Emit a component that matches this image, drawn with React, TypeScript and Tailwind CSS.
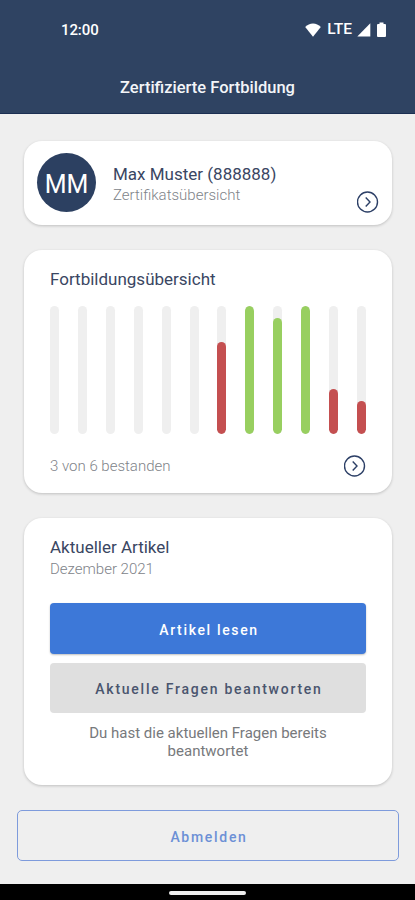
import type { ReactNode } from 'react';

interface Bar {
  height: number;
  passed: boolean;
}

const BAR_MAX = 128;

// Fortbildungen der letzten 12 Monate, null = nicht teilgenommen
const BARS: (Bar | null)[] = [
  null,
  null,
  null,
  null,
  null,
  null,
  { height: 92, passed: false },
  { height: 128, passed: true },
  { height: 116, passed: true },
  { height: 128, passed: true },
  { height: 45, passed: false },
  { height: 33, passed: false },
];

function StatusBar() {
  return (
    <div className="flex h-[60px] items-center justify-between pr-[28px] pl-[61px] text-white">
      <span className="text-[15px] font-medium tracking-[-0.1px]">12:00</span>
      <div className="flex items-center">
        <svg width="16" height="14" viewBox="0 0 16 14" fill="currentColor">
          <path d="M8 13.800 0.200 4C2.400 1.700 5 0.400 8 0.400s5.600 1.300 7.800 3.600z" />
        </svg>
        <span className="ml-[6px] text-[15.500px] font-medium">LTE</span>
        <svg
          className="ml-[5px]"
          width="14"
          height="14"
          viewBox="0 0 14 14"
          fill="currentColor"
        >
          <path d="M13.300 0.300v13.200H0.300z" />
        </svg>
        <svg
          className="ml-[5px]"
          width="11"
          height="16"
          viewBox="0 0 11 16"
          fill="currentColor"
        >
          <path d="M3.500 0.500h4V2H9a1 1 0 0 1 1 1v11a1 1 0 0 1-1 1H2a1 1 0 0 1-1-1V3a1 1 0 0 1 1-1h1.500z" />
        </svg>
      </div>
    </div>
  );
}

function Card({
  className,
  children,
}: {
  className: string;
  children: ReactNode;
}) {
  return (
    <section
      className={`rounded-[18px] bg-white shadow-[0_1px_3px_rgba(0,0,0,0.2)] ${className}`}
    >
      {children}
    </section>
  );
}

function ChevronCircle() {
  return (
    <svg
      className="shrink-0"
      width="22"
      height="22"
      viewBox="0 0 22 22"
      fill="none"
      stroke="#2c3f66"
      strokeWidth="1.400"
    >
      <circle cx="10.500" cy="11" r="10" />
      <path d="m8.700 6.500 4.300 4.500-4.300 4.500" />
    </svg>
  );
}

export default function App() {
  return (
    <div className="flex h-[900px] w-[415px] flex-col overflow-hidden bg-[#efefef] font-[Roboto,sans-serif] text-[#3a4662]">
      <header className="h-[114px] shrink-0 border-b border-[#1b2f52] bg-[#2f4362]">
        <StatusBar />
        <h1 className="mt-[16px] text-center text-[16.500px] leading-6 font-medium text-[#f3f5f8]">
          Zertifizierte Fortbildung
        </h1>
      </header>

      <main className="flex grow flex-col pt-[27px] pr-[23px] pl-[24px]">
        <Card className="flex h-[84px] pt-[12px] pr-[13px] pl-[13px]">
          <div className="flex size-[59px] shrink-0 items-center justify-center rounded-full bg-[#2c4061] pt-[5px] text-[25px] text-white">
            MM
          </div>
          <div className="grow pt-[10px] pl-[17px]">
            <p className="text-[17px] leading-[22px]">Max Muster (888888)</p>
            <p className="text-[15px] leading-[21px] font-light text-[#808389]">
              Zertifikatsübersicht
            </p>
          </div>
          <div className="pt-[38px]">
            <ChevronCircle />
          </div>
        </Card>

        <Card className="mt-[25px] h-[243px] px-[26px] pt-[18px]">
          <h2 className="text-[17px] leading-[22px]">Fortbildungsübersicht</h2>
          <div className="mt-[16px] flex justify-between">
            {BARS.map((bar, i) => (
              <div
                key={i}
                className="flex h-[128px] w-[9px] items-end overflow-hidden rounded-full bg-[#efefef]"
              >
                {bar && (
                  <div
                    className={`w-full rounded-full ${bar.passed ? 'bg-[#98cf60]' : 'bg-[#c44f50]'}`}
                    style={{ height: `${(bar.height / BAR_MAX) * 100}%` }}
                  />
                )}
              </div>
            ))}
          </div>
          <div className="mt-[21px] flex items-center justify-between">
            <p className="text-[15px] font-light text-[#808389]">
              3 von 6 bestanden
            </p>
            <ChevronCircle />
          </div>
        </Card>

        <Card className="mt-[25px] h-[267px] px-[26px] pt-[18px]">
          <h2 className="text-[17px] leading-[22px]">Aktueller Artikel</h2>
          <p className="pt-px text-[15px] leading-[21px] font-light text-[#808389]">
            Dezember 2021
          </p>
          <button className="mt-[23px] block h-[51px] w-full rounded-[4px] bg-[#3d78d8] pt-[3px] pl-[2px] text-[14px] font-medium tracking-[1.650px] text-white shadow-[0_1px_2px_rgba(0,0,0,0.25)]">
            Artikel lesen
          </button>
          <button className="mt-[9px] block h-[50px] w-full rounded-[4px] bg-[#dfdfdf] pt-[2px] pl-[2px] text-[14px] font-medium tracking-[1.750px] text-[#4a556e]">
            Aktuelle Fragen beantworten
          </button>
          <p className="mt-[11px] px-[30px] text-center text-[15px] leading-[18px] text-[#77797c]">
            Du hast die aktuellen Fragen bereits beantwortet
          </p>
        </Card>

        <button className="mx-[-7px] mt-[25px] h-[51px] rounded-[5px] border border-[#7e9bdc] pt-[3px] pl-[2px] text-[14px] font-medium tracking-[1.700px] text-[#6c90d6]">
          Abmelden
        </button>
      </main>

      <footer className="flex h-[16px] shrink-0 items-center justify-center bg-black pt-[2px]">
        <div className="h-[4px] w-[77px] rounded-full bg-[#eeeeee]" />
      </footer>
    </div>
  );
}
